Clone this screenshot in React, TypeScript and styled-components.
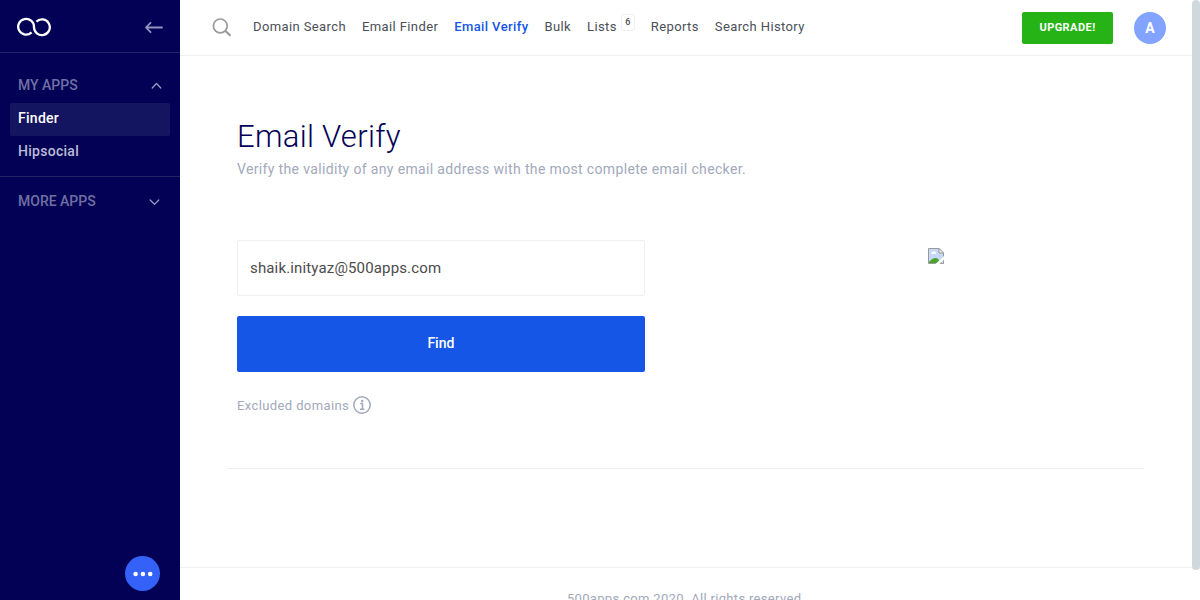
import React from "react";
import styled, { createGlobalStyle } from "styled-components";

const GlobalStyle = createGlobalStyle`
  *, *::before, *::after { box-sizing: border-box; }
  body { margin: 0; background: #fff; font-family: Roboto, "Liberation Sans", sans-serif; color: #4b4f5c; }
  button, input { font-family: inherit; }
  h1, p { margin: 0; padding: 0; }
  a { color: inherit; text-decoration: none; }
`;

const Shell = styled.div`
  display: flex;
  height: 100vh;
  overflow: hidden;
`;

const Sidebar = styled.aside`
  display: flex;
  flex-direction: column;
  flex: 0 0 180px;
  background: #030155;
  color: #fff;
`;

const Brand = styled.div`
  display: flex;
  align-items: center;
  justify-content: space-between;
  height: 53px;
  padding: 2px 17px 0 16px;
  border-bottom: 1px solid #242264;
`;

const HomeLink = styled.a`
  display: flex;
`;

const IconButton = styled.button`
  display: flex;
  padding: 0;
  border: 0;
  background: none;
  color: ${(p) => p.color};
  cursor: pointer;
`;

const AppGroup = styled.section<{ $divided?: boolean }>`
  padding: ${(p) => (p.$divided ? "16px 10px 7px" : "8px 10px")};
  border-bottom: ${(p) => (p.$divided ? "1px solid #242264" : "0")};
`;

const GroupToggle = styled.button`
  display: flex;
  align-items: center;
  justify-content: space-between;
  width: 100%;
  height: 32px;
  margin-bottom: 2px;
  padding: 0 8px;
  border: 0;
  background: none;
  color: #7170a3;
  font-size: 14px;
  font-weight: 500;
  cursor: pointer;
`;

const AppLink = styled.a<{ $active?: boolean }>`
  display: block;
  padding: 0 8px 2px;
  border-radius: 2px;
  background: ${(p) => (p.$active ? "#141561" : "transparent")};
  color: ${(p) => (p.$active ? "#fff" : "#bcbbd6")};
  font-size: 14px;
  font-weight: 500;
  line-height: 31px;
  letter-spacing: 0.02em;
`;

const ChatButton = styled.button`
  display: flex;
  align-items: center;
  justify-content: center;
  align-self: flex-end;
  width: 35px;
  height: 35px;
  margin: auto 20px 9px 0;
  padding: 0;
  border: 0;
  border-radius: 50%;
  background: #3461f8;
  cursor: pointer;
`;

const Page = styled.div`
  flex: 1;
  min-width: 0;
`;

const TopBar = styled.header`
  display: flex;
  align-items: center;
  height: 56px;
  padding: 0 26px 0 32px;
  border-bottom: 1px solid #eeeff1;
`;

const Nav = styled.nav`
  display: flex;
  gap: 16px;
  margin-left: 21px;
  padding-bottom: 2px;
  white-space: nowrap;
`;

const NavLink = styled.a<{ $active?: boolean }>`
  display: flex;
  color: ${(p) => (p.$active ? "#1556e6" : "#4b4f58")};
  font-size: 13px;
  font-weight: ${(p) => (p.$active ? 500 : 400)};
  line-height: 18px;
  letter-spacing: 0.03em;
`;

const Count = styled.span`
  display: flex;
  align-items: center;
  justify-content: center;
  width: 14px;
  height: 17px;
  margin: -4px 0 0 4px;
  border: 1px solid #eeeff1;
  border-radius: 3px;
  font-size: 9px;
  font-weight: 500;
  letter-spacing: 0;
`;

const UpgradeButton = styled.button`
  height: 32px;
  width: 91px;
  margin-left: auto;
  padding: 0;
  border: 0;
  border-radius: 2px;
  background: #25b315;
  color: #fff;
  font-size: 11px;
  font-weight: 700;
  letter-spacing: 0.04em;
  cursor: pointer;
`;

const Avatar = styled.button`
  width: 32px;
  height: 32px;
  margin-left: 21px;
  padding: 0;
  border: 0;
  border-radius: 50%;
  background: #82a3ff;
  color: #fff;
  font-size: 14px;
  font-weight: 700;
  cursor: pointer;
`;

const Content = styled.main`
  margin: 0 48px 0 47px;
  padding: 62px 10px 53px;
  border-bottom: 1px solid #eeeff1;
`;

const Title = styled.h1`
  color: #030155;
  font-size: 31px;
  font-weight: 300;
  line-height: 38px;
  letter-spacing: 0.01em;
`;

const Subtitle = styled.p`
  margin-top: 3px;
  color: #a2a9bb;
  font-size: 14px;
  line-height: 20px;
  letter-spacing: 0.025em;
`;

const Columns = styled.div`
  display: grid;
  grid-template-columns: 5fr 6fr;
  margin-top: 61px;
`;

const Form = styled.form`
  display: flex;
  flex-direction: column;
  gap: 20px;
`;

const EmailInput = styled.input`
  width: 100%;
  height: 56px;
  padding: 0 12px;
  border: 1px solid #eeeff1;
  border-radius: 2px;
  color: #4b4b4b;
  font-size: 15px;
  letter-spacing: 0.01em;
  outline: none;
`;

const FindButton = styled.button`
  height: 56px;
  padding: 0 0 2px;
  border: 0;
  border-radius: 2px;
  background: #1556e6;
  color: #fff;
  font-size: 14px;
  font-weight: 500;
  cursor: pointer;
`;

const Excluded = styled.div`
  display: flex;
  align-items: flex-start;
  gap: 4px;
  margin-top: 4px;
  color: #a2a9bb;
  font-size: 13px;
  line-height: 19px;
  letter-spacing: 0.03em;
`;

const Preview = styled.div`
  display: flex;
  justify-content: center;
  padding: 8px 0 0 94px;
`;

const Footer = styled.footer`
  margin-top: 98px;
  padding: 22px 0;
  border-top: 1px solid #eeeff1;
  color: #a2a9bb;
  font-size: 13px;
  line-height: 18px;
  letter-spacing: 0.025em;
  text-align: center;
`;

const ScrollTrack = styled.div`
  flex: 0 0 8px;
`;

const ScrollThumb = styled.div`
  height: 95%;
  border-radius: 4px;
  background: #cfd8dc;
`;

const Logo = () => (
  <svg width="36" height="20" viewBox="0 0 36 20" fill="none" stroke="#fff" strokeWidth="2.3" role="img" aria-label="500apps">
    <path d="M15.600 15.400A7.900 7.900 0 1 1 18 10A7.900 7.900 0 1 0 20.400 4.600" />
  </svg>
);

const BackArrow = () => (
  <svg width="18" height="12" viewBox="0 0 18 12" fill="none" stroke="currentColor" strokeWidth="1.8" strokeLinecap="round" strokeLinejoin="round">
    <path d="M17 6.500H1M5.500 1.800L1 6.500l4.500 4.700" />
  </svg>
);

const Chevron = ({ up }: { up?: boolean }) => (
  <svg width={up ? 11 : 13} height="8" viewBox={up ? "0 0 11 8" : "0 0 13 8"} fill="none" stroke="#a1a0c4" strokeWidth="1.2" strokeLinecap="round" strokeLinejoin="round">
    <path d={up ? "M1.200 7L5.500 2.500L9.800 7" : "M1.200 3L5.500 7.300L9.800 3"} />
  </svg>
);

const SearchIcon = () => (
  <svg width="20" height="20" viewBox="0 0 20 20" fill="none" stroke="currentColor" strokeWidth="1.700">
    <circle cx="8.300" cy="7.900" r="6.900" />
    <path d="M13.200 12.800L18.500 17.700" strokeWidth="2.200" />
  </svg>
);

const InfoIcon = () => (
  <svg width="18" height="18" viewBox="0 0 18 18" fill="none" stroke="currentColor" strokeWidth="1.500">
    <circle cx="9" cy="9" r="8.200" />
    <path d="M7.200 7.500H9.500V13M7 13.200h4.300" />
    <circle cx="9.200" cy="5" r="1.200" fill="currentColor" stroke="none" />
  </svg>
);

const Dots = () => (
  <svg width="20" height="6" viewBox="0 0 20 6" fill="#fff">
    <circle cx="2.600" cy="3" r="2.300" />
    <circle cx="9.900" cy="3" r="2.300" />
    <circle cx="17.200" cy="3" r="2.300" />
  </svg>
);

const MissingImage = () => (
  <svg width="16" height="16" viewBox="0 0 16 16" role="img" aria-label="Missing image">
    <path d="M0.500 0.500H11L15.500 5V15.500H0.500Z" fill="#c6d7f7" stroke="#9a9a9a" />
    <path d="M11 0.500V5H15.500Z" fill="#f4f4f4" stroke="#9a9a9a" />
    <path d="M3 6Q3 4 4.500 4Q5.500 2 7 4Q8.500 4 8.500 6Z" fill="#fff" />
    <path d="M1 15V14Q4.500 10 7.500 10Q10 10 11 12L14 15Z" fill="#4aa52e" />
    <path d="M7.500 16L16 8V11.500L11.500 16Z" fill="#fff" />
  </svg>
);

const navItems: { label: string; count?: number }[] = [
  { label: "Domain Search" },
  { label: "Email Finder" },
  { label: "Email Verify" },
  { label: "Bulk" },
  { label: "Lists", count: 6 },
  { label: "Reports" },
  { label: "Search History" },
];

export default function App() {
  const [email, setEmail] = React.useState("shaik.inityaz@500apps.com");
  return (
    <Shell>
      <GlobalStyle />
      <Sidebar>
        <Brand>
          <HomeLink href="#home"><Logo /></HomeLink>
          <IconButton color="#9493bf" aria-label="Collapse menu"><BackArrow /></IconButton>
        </Brand>
        <AppGroup $divided>
          <GroupToggle aria-expanded="true">MY APPS<Chevron up /></GroupToggle>
          <AppLink href="#finder" $active>Finder</AppLink>
          <AppLink href="#hipsocial">Hipsocial</AppLink>
        </AppGroup>
        <AppGroup>
          <GroupToggle aria-expanded="false">MORE APPS<Chevron /></GroupToggle>
        </AppGroup>
        <ChatButton aria-label="More options"><Dots /></ChatButton>
      </Sidebar>
      <Page>
        <TopBar>
          <IconButton color="#999" aria-label="Search"><SearchIcon /></IconButton>
          <Nav>
            {navItems.map(({ label, count }) => (
              <NavLink key={label} href="#nav" $active={label === "Email Verify"}>
                {label}
                {count && <Count>{count}</Count>}
              </NavLink>
            ))}
          </Nav>
          <UpgradeButton>UPGRADE!</UpgradeButton>
          <Avatar aria-label="Account">A</Avatar>
        </TopBar>
        <Content>
          <Title>Email Verify</Title>
          <Subtitle>Verify the validity of any email address with the most complete email checker.</Subtitle>
          <Columns>
            <Form onSubmit={(e) => e.preventDefault()}>
              <EmailInput type="email" aria-label="Email address" value={email} onChange={(e) => setEmail(e.target.value)} />
              <FindButton type="submit">Find</FindButton>
              <Excluded>
                Excluded domains
                <IconButton type="button" color="#a2a9bb" aria-label="About excluded domains"><InfoIcon /></IconButton>
              </Excluded>
            </Form>
            <Preview><MissingImage /></Preview>
          </Columns>
        </Content>
        <Footer>500apps.com 2020. All rights reserved.</Footer>
      </Page>
      <ScrollTrack><ScrollThumb /></ScrollTrack>
    </Shell>
  );
}
